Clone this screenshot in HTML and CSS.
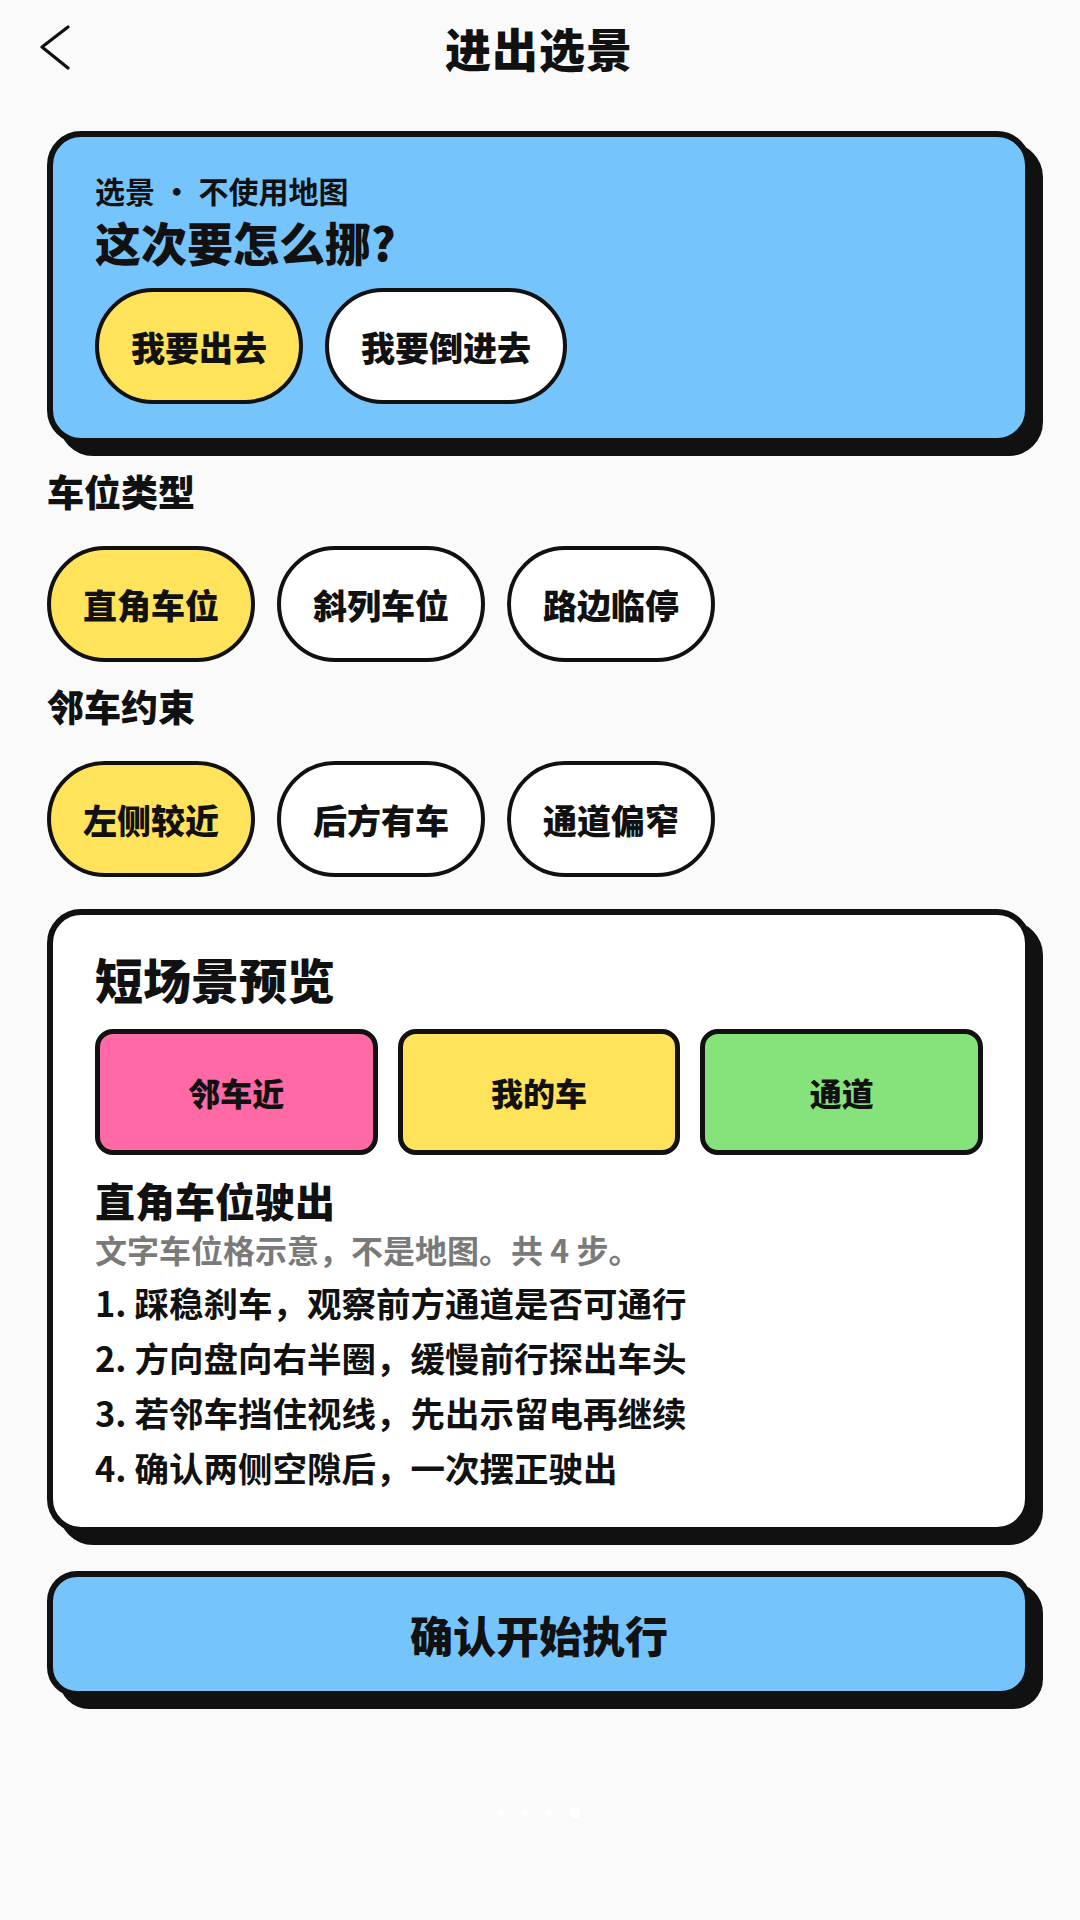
FILE: index.html
```html
<!DOCTYPE html>
<html lang="zh-CN">
<head>
<meta charset="utf-8">
<title>进出选景</title>
<link rel="stylesheet" href="styles.css">
</head>
<body>
<div class="page">
  <header class="topbar">
    <span class="back">
      <svg width="34" height="46" viewBox="0 0 34 46"><polyline points="30,2 4,22 30,43" fill="none" stroke="#111" stroke-width="3.2" stroke-linecap="round" stroke-linejoin="round"/></svg>
    </span>
    <h1 class="title">进出选景</h1>
  </header>

  <section class="hero card-shadow">
    <div class="eyebrow">选景 · 不使用地图</div>
    <div class="hero-q">这次要怎么挪?</div>
    <div class="chips">
      <span class="chip on">我要出去</span>
      <span class="chip">我要倒进去</span>
    </div>
  </section>

  <div class="label first">车位类型</div>
  <div class="chips">
    <span class="chip on">直角车位</span>
    <span class="chip">斜列车位</span>
    <span class="chip">路边临停</span>
  </div>

  <div class="label">邻车约束</div>
  <div class="chips">
    <span class="chip on">左侧较近</span>
    <span class="chip">后方有车</span>
    <span class="chip">通道偏窄</span>
  </div>

  <section class="preview card-shadow">
    <div class="preview-title">短场景预览</div>
    <div class="tiles">
      <div class="tile pink">邻车近</div>
      <div class="tile yellow">我的车</div>
      <div class="tile green">通道</div>
    </div>
    <div class="plan-title">直角车位驶出</div>
    <div class="plan-sub">文字车位格示意，不是地图。共 4 步。</div>
    <ol class="steps">
      <li>1. 踩稳刹车，观察前方通道是否可通行</li>
      <li>2. 方向盘向右半圈，缓慢前行探出车头</li>
      <li>3. 若邻车挡住视线，先出示留电再继续</li>
      <li>4. 确认两侧空隙后，一次摆正驶出</li>
    </ol>
  </section>

  <div class="confirm card-shadow">确认开始执行</div>

  <div class="dots">
    <span class="dot"></span><span class="dot"></span><span class="dot"></span><span class="dot big"></span>
  </div>
</div>
</body>
</html>
```

FILE: styles.css
```css
* { box-sizing: border-box; margin: 0; padding: 0; }

html, body {
  background: #fafafa;
}

body {
  width: 1080px;
  height: 1920px;
  overflow: hidden;
  font-family: "Noto Sans CJK SC", "Noto Sans", sans-serif;
  color: #111;
}

.page {
  padding: 0 49px 0 47px;
  display: flex;
  flex-direction: column;
}

.topbar {
  height: 94px;
  display: flex;
  align-items: center;
  justify-content: center;
  position: relative;
}

.back {
  position: absolute;
  left: -9px;
  top: 25px;
  width: 34px;
  height: 46px;
}

.title {
  font-size: 46px;
  font-weight: 900;
  line-height: 94px;
  letter-spacing: 1px;
}

.card-shadow {
  border: 6px solid #111;
  box-shadow: 12px 12px 0 #111;
}

.hero {
  margin-top: 37px;
  background: #75c4fc;
  border-radius: 34px;
  padding: 33px 42px 34px;
}

.eyebrow {
  font-size: 30px;
  font-weight: 700;
  line-height: 40px;
}

.hero-q {
  font-size: 46px;
  font-weight: 900;
  line-height: 58px;
  margin-top: 2px;
  margin-bottom: 18px;
}

.chips {
  display: flex;
  gap: 22px;
}

.chip {
  height: 116px;
  padding: 0 32px;
  border: 4px solid #111;
  border-radius: 999px;
  background: #fff;
  display: inline-flex;
  align-items: center;
  justify-content: center;
  font-size: 34px;
  font-weight: 900;
}

.chip.on {
  background: #ffe35a;
}

.label {
  font-size: 37px;
  font-weight: 900;
  line-height: 46px;
  margin: 21px 0 32px;
}

.label.first {
  margin-top: 24px;
}

.preview {
  margin-top: 32px;
  background: #fff;
  border-radius: 34px;
  padding: 32px 42px 32px;
}

.preview-title {
  font-size: 48px;
  font-weight: 900;
  line-height: 62px;
}

.tiles {
  margin-top: 20px;
  display: grid;
  grid-template-columns: repeat(3, 1fr);
  gap: 20px;
}

.tile {
  height: 126px;
  border: 5px solid #111;
  border-radius: 18px;
  display: flex;
  align-items: center;
  justify-content: center;
  font-size: 32px;
  font-weight: 900;
}

.tile.pink { background: #ff69a5; }
.tile.yellow { background: #ffe35a; }
.tile.green { background: #86e37b; }

.plan-title {
  margin-top: 19px;
  font-size: 40px;
  font-weight: 900;
  line-height: 52px;
}

.plan-sub {
  margin-top: 3px;
  font-size: 32px;
  font-weight: 700;
  line-height: 40px;
  color: #7a7a7a;
}

.steps {
  list-style: none;
  margin-top: 6px;
}

.steps li {
  font-size: 34.5px;
  font-weight: 700;
  line-height: 55px;
}

.confirm {
  margin-top: 38px;
  height: 126px;
  border-radius: 30px;
  background: #75c4fc;
  display: flex;
  align-items: center;
  justify-content: center;
  font-size: 43px;
  font-weight: 900;
}

.dots {
  margin-top: 110px;
  display: flex;
  justify-content: center;
  align-items: center;
  gap: 16px;
}

.dot {
  width: 8px;
  height: 8px;
  border-radius: 50%;
  background: #ffffff;
  box-shadow: 0 0 2px rgba(0,0,0,0.04);
}

.dot.big {
  width: 12px;
  height: 12px;
}
```
